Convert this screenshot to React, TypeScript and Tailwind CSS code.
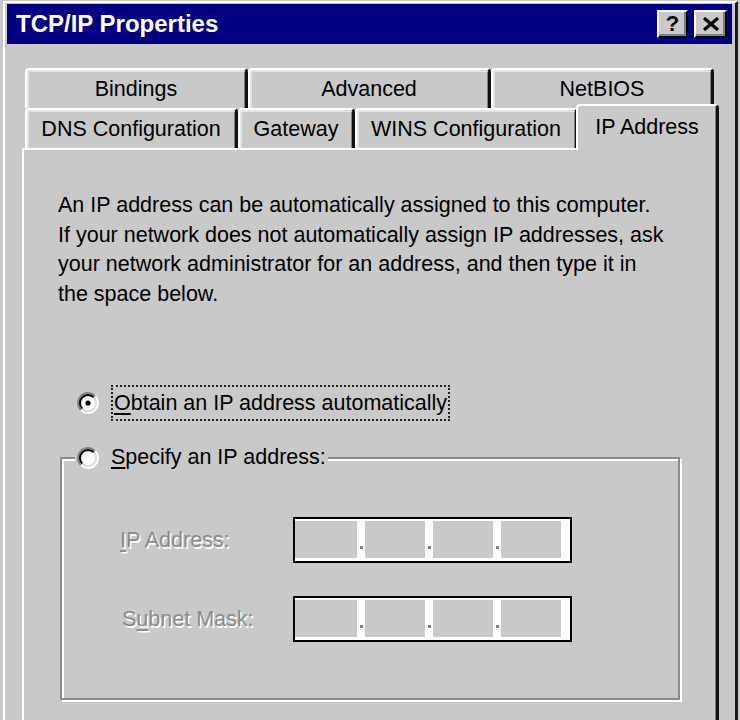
import React from "react"

const tabBase =
  "flex h-[40px] items-center justify-center rounded-t-[4px] border-l-2 border-t-2 border-r-[3px] border-white border-r-[#111] shadow-[inset_2px_2px_0_#e4e4e4,inset_-1px_0_0_#808080] text-[21.5px] leading-[24px]"

function Radio({ checked }: { checked?: boolean }) {
  return (
    <svg width="22" height="22" viewBox="0 0 22 22" className="shrink-0">
      <circle cx="11" cy="11" r="8" fill="#fff" />
      <path d="M3.93 18.07 A10 10 0 0 1 18.07 3.93" fill="none" stroke="#808080" strokeWidth="2" />
      <path d="M18.07 3.93 A10 10 0 0 1 3.93 18.07" fill="none" stroke="#fff" strokeWidth="2" />
      <path d="M5.34 16.66 A8 8 0 0 1 16.66 5.34" fill="none" stroke="#000" strokeWidth="2" />
      <path d="M16.66 5.34 A8 8 0 0 1 5.34 16.66" fill="none" stroke="#dcdcdc" strokeWidth="2" />
      {checked && <circle cx="11" cy="11" r="2.6" fill="#000" />}
    </svg>
  )
}

function IpBox() {
  const sep = (
    <div className="flex w-[8px] items-end justify-center pb-[9px]">
      <span className="h-[3px] w-[3px] bg-[#808080]" />
    </div>
  )
  return (
    <div className="flex h-[46px] w-[279px] border-2 border-black bg-white pt-[2px] pb-[3px]">
      <div className="w-[62px] bg-[#c9c9c9]" />
      {sep}
      <div className="w-[60px] bg-[#c9c9c9]" />
      {sep}
      <div className="w-[60px] bg-[#c9c9c9]" />
      {sep}
      <div className="w-[60px] bg-[#c9c9c9]" />
    </div>
  )
}

export default function App() {
  return (
    <div className="h-[720px] w-[740px] overflow-hidden bg-[#c9c9c9] pl-[3px] pt-[1px] font-['Liberation_Sans',Arial,sans-serif] text-black">
      <div className="h-[780px] w-[735px] border-l-2 border-t-2 border-r-[3px] border-white border-r-[#1a1a1a] px-[2px] pt-[1px] pr-[3px]">
        {/* title bar */}
        <div className="flex h-[40px] items-center justify-between bg-[#000080] pl-[9px] pr-[5px]">
          <span className="text-[24px] font-bold leading-none text-white">TCP/IP Properties</span>
          <div className="flex gap-[6px]">
            <button
              type="button"
              className="flex h-[28px] w-[31px] items-center justify-center border-2 border-white border-r-black border-b-black bg-[#c9c9c9] text-[22px] font-bold leading-none shadow-[inset_-2px_-2px_0_#808080]"
            >
              ?
            </button>
            <button
              type="button"
              className="flex h-[28px] w-[33px] items-center justify-center border-2 border-white border-r-black border-b-black bg-[#c9c9c9] shadow-[inset_-2px_-2px_0_#808080]"
            >
              <svg width="18" height="14" viewBox="0 0 18 14">
                <path d="M2 1 L16 13 M16 1 L2 13" stroke="#000" strokeWidth="3.2" />
              </svg>
            </button>
          </div>
        </div>

        {/* tabs */}
        <div className="mt-[24px] pl-[18px]">
          <div className="flex">
            <div className={`${tabBase} w-[223px]`}>Bindings</div>
            <div className={`${tabBase} w-[243px]`}>Advanced</div>
            <div className={`${tabBase} w-[223px]`}>NetBIOS</div>
          </div>
          <div className="flex h-[40px] items-end">
            <div className={`${tabBase} w-[213px]`}>DNS Configuration</div>
            <div className={`${tabBase} w-[117px]`}>Gateway</div>
            <div className={`${tabBase} w-[223px]`}>WINS Configuration</div>
            <div className="relative z-10 -mb-[2px] ml-[-2px] flex h-[46px] w-[143px] items-start justify-center rounded-t-[4px] border-l-2 border-t-2 border-r-[3px] border-white border-r-[#111] bg-[#c9c9c9] pt-[9px] text-[21.5px] leading-[24px] shadow-[inset_-1px_0_0_#808080]">
              IP Address
            </div>
          </div>
        </div>

        {/* panel */}
        <div className="ml-[15px] h-[600px] w-[697px] border-l-2 border-t-2 border-r-[3px] border-white border-r-[#111] pl-[34px] pt-[41px] shadow-[inset_-1px_0_0_#808080]">
          <div className="text-[21.5px] leading-[29.5px] whitespace-nowrap">
            <p>An IP address can be automatically assigned to this computer.</p>
            <p>If your network does not automatically assign IP addresses, ask</p>
            <p>your network administrator for an address, and then type it in</p>
            <p>the space below.</p>
          </div>

          <div className="mt-[76px] ml-[19px] flex items-center gap-[12px]">
            <Radio checked />
            <span className="border-2 border-dotted border-[#222] px-[1px] pt-[1px] text-[21.5px] leading-[31px]">
              <span className="underline underline-offset-[3px]">O</span>btain an IP address automatically
            </span>
          </div>

          <fieldset className="mt-[20px] ml-[2px] w-[620px] border-2 border-[#8a8a8a] pb-[56px] shadow-[inset_2px_2px_0_#fff,2px_2px_0_#fff]">
            <legend className="ml-[13px] bg-[#c9c9c9] px-[2px]">
              <span className="flex items-center gap-[12px] text-[21.5px] leading-[33px]">
                <Radio />
                <span>
                  <span className="underline underline-offset-[3px]">S</span>pecify an IP address:
                </span>
              </span>
            </legend>
            <div className="flex flex-col gap-[33px] pt-[43px] text-[21.5px] leading-[24px]">
              <div className="flex items-center">
                <span className="w-[231px] pl-[58px] text-[#8c8c8c] [text-shadow:1.5px_1.5px_0_#fff]">
                  <span className="underline underline-offset-[3px]">I</span>P Address:
                </span>
                <IpBox />
              </div>
              <div className="flex items-center">
                <span className="w-[231px] pl-[60px] text-[#8c8c8c] [text-shadow:1.5px_1.5px_0_#fff]">
                  S<span className="underline underline-offset-[3px]">u</span>bnet Mask:
                </span>
                <IpBox />
              </div>
            </div>
          </fieldset>
        </div>
      </div>
    </div>
  )
}
